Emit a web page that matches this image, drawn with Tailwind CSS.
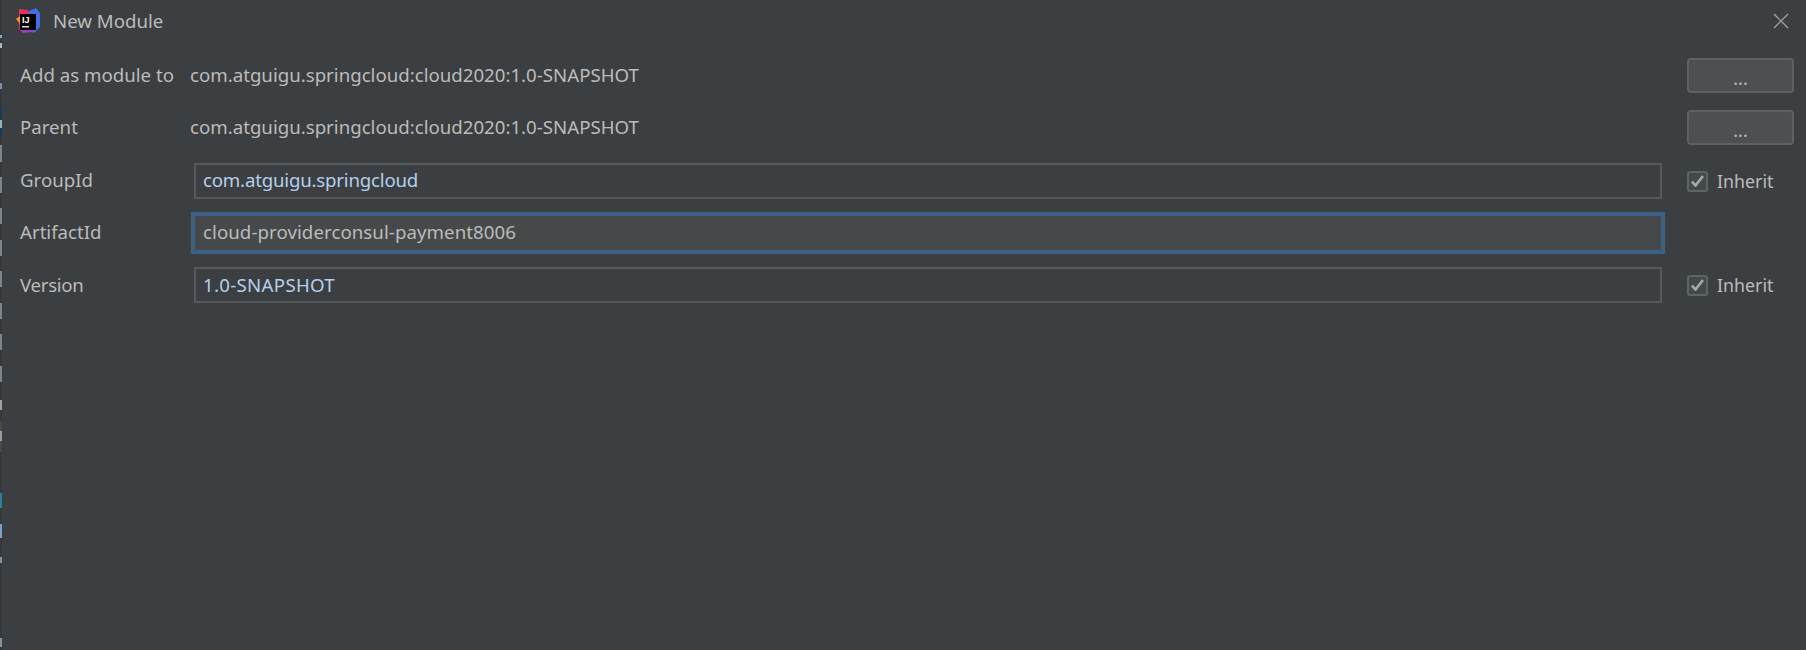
<!DOCTYPE html>
<html lang="en">
<head>
  <meta charset="UTF-8" />
  <title>New Module</title>
  <script src="https://cdn.jsdelivr.net/npm/@tailwindcss/browser@4"></script>
</head>
<body class="bg-[#3c3f41] text-[#bbbbbb] text-[18.67px] leading-[24px] font-['Noto_Sans',sans-serif] overflow-hidden">
  <div class="w-[1806px] h-[650px] flex">
    <!-- edge of the window behind -->
    <div class="w-[2px] shrink-0 bg-[#36393b] flex flex-col">
      <div class="h-[35px]"></div>
      <div class="h-[3px] bg-[#7fa8c0]"></div>
      <div class="h-[5px]"></div>
      <div class="h-[5px] bg-[#a8b8b8]"></div>
      <div class="h-[35px]"></div>
      <div class="h-[6px] bg-[#7a8fb0]"></div>
      <div class="h-[17px]"></div>
      <div class="h-[14px] bg-[#1d3a55]"></div>
      <div class="h-[8px] bg-[#8fb5b5]"></div>
      <div class="h-[9px] bg-[#1d3a55]"></div>
      <div class="h-[8px]"></div>
      <div class="h-[17px] bg-[#7d8488]"></div>
      <div class="h-[15px]"></div>
      <div class="h-[16px] bg-[#7d8488]"></div>
      <div class="h-[15px]"></div>
      <div class="h-[16px] bg-[#7d8488]"></div>
      <div class="h-[16px]"></div>
      <div class="h-[16px] bg-[#7d8488]"></div>
      <div class="h-[15px]"></div>
      <div class="h-[16px] bg-[#7d8488]"></div>
      <div class="h-[16px]"></div>
      <div class="h-[16px] bg-[#7d8488]"></div>
      <div class="h-[15px]"></div>
      <div class="h-[16px] bg-[#7d8488]"></div>
      <div class="h-[16px]"></div>
      <div class="h-[16px] bg-[#7d8488]"></div>
      <div class="h-[18px]"></div>
      <div class="h-[10px] bg-[#a0a0a0]"></div>
      <div class="h-[11px]"></div>
      <div class="h-[10px] bg-[#4a4a40]"></div>
      <div class="h-[10px] bg-[#9a9a98]"></div>
      <div class="h-[11px] bg-[#4a4a40]"></div>
      <div class="h-[41px]"></div>
      <div class="h-[15px] bg-[#2f7f9f]"></div>
      <div class="h-[16px]"></div>
      <div class="h-[14px] bg-[#7fa0c8]"></div>
      <div class="h-[19px]"></div>
      <div class="h-[6px] bg-[#6f98a8]"></div>
      <div class="h-[75px]"></div>
      <div class="h-[9px] bg-[#7f98a0]"></div>
    </div>

    <div class="flex-1 flex flex-col pl-[18px] pr-[12px]">
      <!-- title bar -->
      <div class="h-[42px] flex items-center -ml-[4px] -mr-[2px]">
        <svg width="24" height="26" viewBox="0 0 24 26" class="shrink-0 -mt-[1px]">
          <path d="M3 1l9 1 2 4-8 18-3-3z" fill="#e8305f"/>
          <path d="M13 3l7-3 4 5v14l-6 6-6-3z" fill="#3f6fe8"/>
          <path d="M2 19l5 6 11-1-3-6z" fill="#a03cb8"/>
          <path d="M0 11l4-3v8z" fill="#f7941d"/>
          <rect x="4" y="6" width="16" height="16" fill="#000"/>
          <rect x="6" y="18" width="7" height="1.5" fill="#ddd"/>
          <text x="6" y="15" font-size="9" font-weight="700" fill="#fff" font-family="Liberation Sans">IJ</text>
        </svg>
        <span class="ml-[13px] -mt-[1px]">New Module</span>
        <svg width="16" height="16" viewBox="0 0 16 16" class="ml-auto mr-[7px]" fill="none" stroke="#a8a8a8" stroke-width="1.2"><path d="M1 1l14 14M15 1L1 15"/></svg>
      </div>
      <!-- form -->
      <div class="flex flex-col">
        <div class="h-[35px] mt-[16px] flex items-center">
          <span class="w-[170px] -mt-[2px]">Add as module to</span>
          <span class="flex-1 -mt-[2px]">com.atguigu.springcloud:cloud2020:1.0-SNAPSHOT</span>
          <button class="w-[107px] h-[35px] rounded-[4px] border-2 border-[#5e6163] bg-[#4c5052] text-[#bbbbbb] text-[18px] pt-[4px]">...</button>
        </div>
        <div class="h-[35px] mt-[17px] flex items-center">
          <span class="w-[170px] -mt-[2px]">Parent</span>
          <span class="flex-1 -mt-[2px]">com.atguigu.springcloud:cloud2020:1.0-SNAPSHOT</span>
          <button class="w-[107px] h-[35px] rounded-[4px] border-2 border-[#5e6163] bg-[#4c5052] text-[#bbbbbb] text-[18px] pt-[4px]">...</button>
        </div>
        <div class="h-[36px] mt-[18px] flex items-center">
          <span class="w-[174px] -mt-[2px]">GroupId</span>
          <div class="w-[1468px] h-[36px] border-2 border-[#565859] flex items-center px-[7px] pb-[2px] text-[#b4cfea] tracking-[-0.2px]">com.atguigu.springcloud</div>
          <label class="ml-[25px] flex items-center gap-[9px] text-[17.8px]">
            <span class="w-[21px] h-[21px] rounded-[3px] border-2 border-[#5f6364] bg-[#43494a] flex items-center justify-center">
              <svg width="13" height="12" viewBox="0 0 13 12" fill="none" stroke="#a9a9a9" stroke-width="2.6"><path d="M1 6.5l3.5 4L12 1"/></svg>
            </span>
            Inherit
          </label>
        </div>
        <div class="h-[36px] mt-[16px] flex items-center">
          <span class="w-[174px] -mt-[2px]">ArtifactId</span>
          <div class="w-[1468px] h-[36px] outline-[3px] outline-[#3d6185] border border-[#3d6185] bg-[#45494a] flex items-center px-[8px] pb-[2px] tracking-[0.07px]">cloud-providerconsul-payment8006</div>
        </div>
        <div class="h-[36px] mt-[16px] flex items-center">
          <span class="w-[174px] tracking-[-0.3px]">Version</span>
          <div class="w-[1468px] h-[36px] border-2 border-[#565859] flex items-center px-[7px] text-[#b4cfea] tracking-[0.3px]">1.0-SNAPSHOT</div>
          <label class="ml-[25px] flex items-center gap-[9px] text-[17.8px]">
            <span class="w-[21px] h-[21px] rounded-[3px] border-2 border-[#5f6364] bg-[#43494a] flex items-center justify-center">
              <svg width="13" height="12" viewBox="0 0 13 12" fill="none" stroke="#a9a9a9" stroke-width="2.6"><path d="M1 6.5l3.5 4L12 1"/></svg>
            </span>
            Inherit
          </label>
        </div>
      </div>
    </div>
  </div>
</body>
</html>
